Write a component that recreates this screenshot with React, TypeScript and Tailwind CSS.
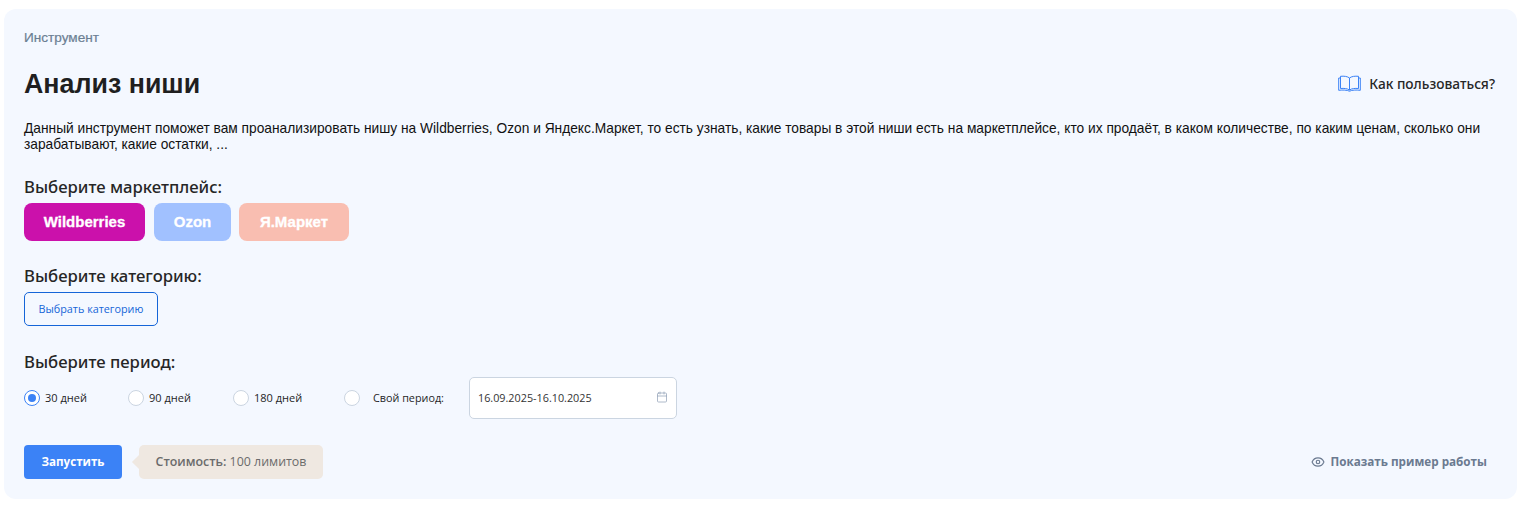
import { Eye, Calendar } from "lucide-react"

const sans = "font-['Open_Sans',sans-serif]"
const noto = "font-['Noto_Sans',sans-serif]"
const arial = "font-['Liberation_Sans',sans-serif]"

const BookIcon = () => (
  <svg width="23" height="17" viewBox="0 0 23 17" fill="none" stroke="#3b82f6" strokeWidth="1" aria-hidden>
    <path d="M11.5 3 C9.5 1.3 6 1 2.5 1.3 V13.5 C6 13.2 9.5 13.5 11.5 15 C13.5 13.5 17 13.2 20.5 13.5 V1.3 C17 1 13.5 1.3 11.5 3 Z" />
    <path d="M11.5 3 V15" />
    <path d="M2.5 3 H0.7 V15.3 C5 14.8 9 15 11.5 16.2 C14 15 18 14.8 22.3 15.3 V3 H20.5" />
  </svg>
)

const Radio = ({ label, checked, className }: { label: string; checked?: boolean; className: string }) => (
  <label className={`flex items-center ${className}`}>
    <span
      className={`flex size-4 shrink-0 items-center justify-center rounded-full border bg-white ${
        checked ? "border-[#3b82f6]" : "border-[#cbd5e1]"
      }`}
    >
      {checked && <span className="size-2 rounded-full bg-[#3b82f6]" />}
    </span>
    <span className={`ml-[5px] text-[11px] text-[#1f1f1f] ${sans}`}>{label}</span>
  </label>
)

const SectionLabel = ({ children }: { children: string }) => (
  <h3 className={`text-[16.7px] leading-[22px] font-medium text-[#262626] ${noto}`}>{children}</h3>
)

const markets = [
  { name: "Wildberries", cls: "w-[121px] mr-px bg-[#cb11ab]" },
  { name: "Ozon", cls: "w-[77px] bg-[#a1c1ff]" },
  { name: "Я.Маркет", cls: "w-[110px] bg-[#f9beb1]" },
]

export default function App() {
  return (
    <div className="h-[512px] bg-white pt-[9px] pr-[9px] pl-1">
      <div className="h-[490px] rounded-xl bg-[#f4f8ff] px-5 pt-[21px]">
        <p className={`text-[13.6px] leading-4 text-[#6b7f93] [-webkit-text-stroke:0.2px_#6b7f93] ${arial}`}>Инструмент</p>

        <div className="mt-[22px] flex items-center justify-between pr-[2px]">
          <h1 className={`text-[26.8px] leading-[32px] font-bold text-[#1f1f1f] ${arial}`}>Анализ ниши</h1>
          <a className="flex items-center gap-2">
            <BookIcon />
            <span className={`text-[13.7px] font-medium text-[#262626] ${noto}`}>Как пользоваться?</span>
          </a>
        </div>

        <p className={`mt-[21px] text-[13.75px] leading-4 text-[#111] ${arial}`}>
          Данный инструмент поможет вам проанализировать нишу на Wildberries, Ozon и Яндекс.Маркет, то есть узнать, какие товары в этой ниши есть на маркетплейсе, кто их продаёт, в каком количестве, по каким ценам, сколько они зарабатывают, какие остатки, ...
        </p>

        <div className="mt-[23px]">
          <SectionLabel>Выберите маркетплейс:</SectionLabel>
        </div>
        <div className="mt-[5px] flex gap-2">
          {markets.map((m) => (
            <button
              key={m.name}
              className={`h-[38px] rounded-lg text-[15px] font-bold text-white [-webkit-text-stroke:0.3px_white] ${arial} ${m.cls}`}
            >
              {m.name}
            </button>
          ))}
        </div>

        <div className="mt-[24px]">
          <SectionLabel>Выберите категорию:</SectionLabel>
        </div>
        <button
          className={`mt-[5px] h-[34px] w-[134px] rounded-[5px] border border-[#1565d8] text-[10.8px] text-[#1565d8] ${sans}`}
        >
          Выбрать категорию
        </button>

        <div className="mt-[25px]">
          <SectionLabel>Выберите период:</SectionLabel>
        </div>

        <div className="mt-[4px] flex items-center">
          <Radio label="30 дней" checked className="w-[104px]" />
          <Radio label="90 дней" className="w-[105px]" />
          <Radio label="180 дней" className="w-[111px]" />
          <label className="flex w-[125px] items-center">
            <span className="size-4 shrink-0 rounded-full border border-[#cbd5e1] bg-white" />
            <span className={`ml-[13px] text-[10.8px] text-[#1f1f1f] ${sans}`}>Свой период:</span>
          </label>
          <div className="flex h-[42px] w-[208px] items-center justify-between rounded-[5px] border border-[#cbd5e1] bg-white pr-2 pl-2">
            <span className={`mt-px text-[10.8px] text-[#333] ${sans}`}>16.09.2025-16.10.2025</span>
            <Calendar className="mb-[3px] size-3 text-[#94a3b8]" strokeWidth={1.5} />
          </div>
        </div>

        <div className="mt-[26px] flex items-center justify-between pr-[10px]">
          <div className="flex items-center">
            <button className={`h-[34px] w-[98px] rounded-[4px] bg-[#3b82f6] text-[11.6px] font-bold text-white ${sans}`}>
              Запустить
            </button>
            <div className="relative ml-[17px] flex h-[34px] w-[184px] items-center justify-center rounded-[5px] bg-[#efe8e1]">
              <span className="absolute top-[12px] -left-[5px] size-[10px] rotate-45 bg-[#efe8e1]" />
              <span className={`text-[12.4px] text-[#6b6b6b] ${sans}`}>
                <span className="font-semibold">Стоимость:</span> 100 лимитов
              </span>
            </div>
          </div>
          <a className="flex items-center gap-[6px]">
            <Eye className="size-[14px] text-[#6b7a90]" strokeWidth={2} />
            <span className={`text-[11.7px] font-bold text-[#6b7a90] ${sans}`}>Показать пример работы</span>
          </a>
        </div>
      </div>
    </div>
  )
}
